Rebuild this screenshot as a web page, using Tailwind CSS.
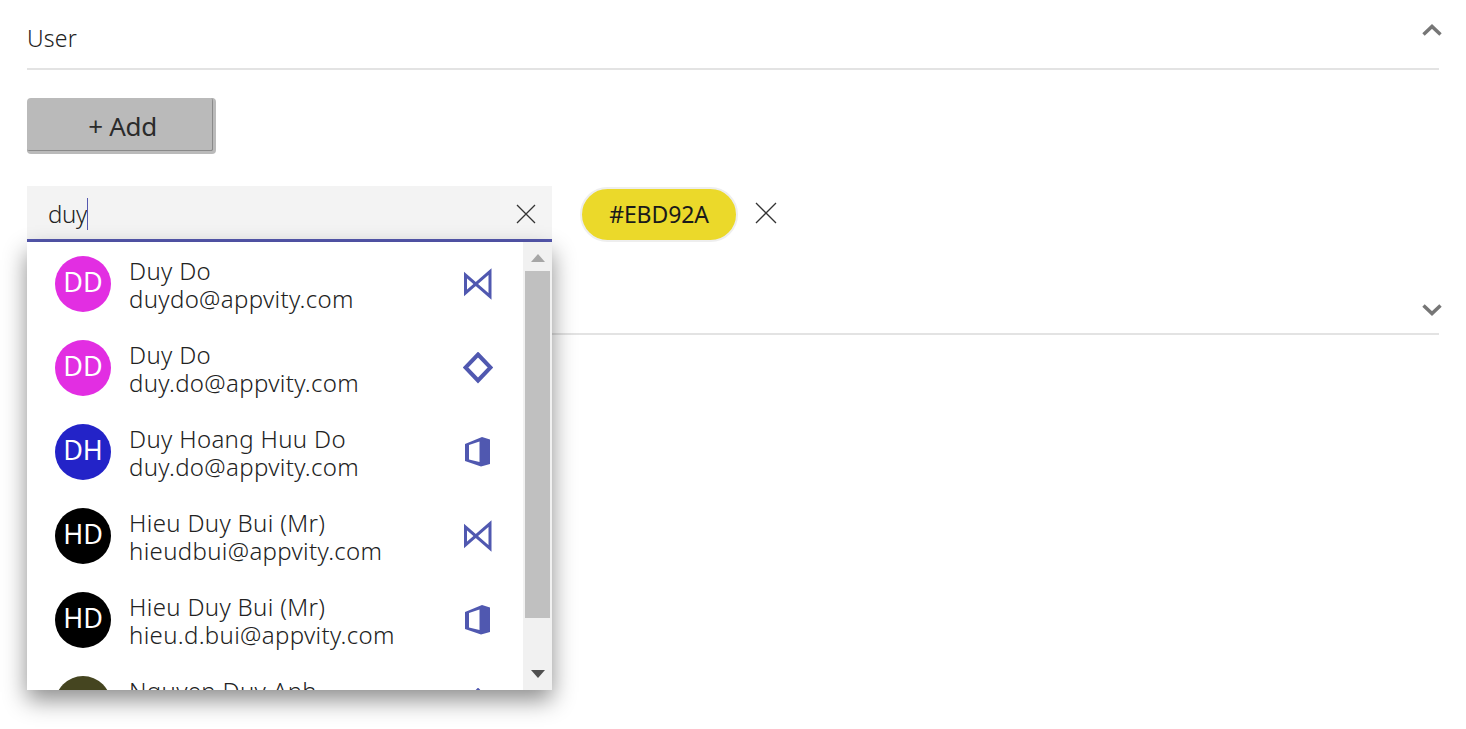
<!DOCTYPE html>
<html lang="en">
<head>
  <meta charset="UTF-8" />
  <title>User picker</title>
  <script src="https://cdn.jsdelivr.net/npm/@tailwindcss/browser@4"></script>
</head>
<body class="bg-white text-[#333] font-['Noto_Sans',sans-serif] overflow-hidden">
  <main class="w-[1466px] h-[729px] px-[27px] overflow-hidden">
    <!-- user section -->
    <section class="h-[70px] border-b-2 border-[#e3e3e3] flex justify-between items-start">
      <h2 class="text-[23px] leading-[30px] mt-[23px] font-light tracking-[0.2px] text-[#222]">User</h2>
      <svg class="mt-[23px] -mr-[4px]" width="22" height="14" viewBox="0 0 22 14"><path d="M2.500 11.500 11 3.500l8.500 8" fill="none" stroke="#767676" stroke-width="3.500"/></svg>
    </section>

    <button class="block mt-[28px] w-[189px] h-[56px] rounded-[4px] bg-[#bababa] border-r-[3px] border-b-[3px] border-[#bababa] shadow-[inset_-1px_-1px_0_#8a8a8a] text-[26px] leading-[56px] tracking-[-0.3px] text-[#2b2b2b] pl-[5px]">+ Add</button>

    <div class="relative mt-[32px] flex items-start h-[57px]">
      <div class="w-[525px] h-[56px] bg-[#f3f3f3] border-b-[3px] border-[#5558af] flex items-center justify-between relative">
        <div class="pl-[21px] flex items-center text-[24px] font-light tracking-[-0.3px] text-[#222] h-[34px] mt-[3px]">duy<span class="w-px h-[32px] bg-[#5558af]"></span></div>
        <div class="w-[52px] h-full bg-[#f4f4f4] flex items-center justify-center">
          <svg class="mt-[2px]" width="20" height="20" viewBox="0 0 20 20"><path d="M1 1l18 18M19 1 1 19" stroke="#333" stroke-width="1.300" fill="none"/></svg>
        </div>
      </div>

      <div class="ml-[28px] mt-[1px] h-[55px] w-[158px] rounded-full bg-[#ebd92a] border-2 border-[#eeeeee] flex items-center justify-center text-[23px] tracking-[-0.1px] text-[#1a1a1a]">#EBD92A</div>
      <svg class="ml-[17px] mt-[16px]" width="22" height="22" viewBox="0 0 22 22"><path d="M1 1l20 20M21 1 1 21" stroke="#333" stroke-width="1.300" fill="none"/></svg>

      <!-- results dropdown -->
      <div class="absolute left-0 top-[56px] z-10 w-[525px] h-[448px] bg-white overflow-hidden flex shadow-[0_10px_22px_rgba(0,0,0,0.45)]">
        <ul class="w-[496px] flex flex-col pt-[14px]">
          <li class="h-[84px] shrink-0 flex items-start pl-[28px] pr-[30px]">
            <span class="w-[56px] h-[56px] pb-[3px] rounded-full bg-[#e22ee2] text-white flex items-center justify-center text-[27px]">DD</span>
            <div class="ml-[18px] mt-[1px] flex-1 text-[24px] font-light tracking-[0.33px] leading-[28px] text-[#222]"><p>Duy Do</p><p>duydo@appvity.com</p></div>
            <svg class="mt-[12px]" width="30" height="32" viewBox="0 0 30 32"><path d="M2.500 7v18L27 3.500v25z" fill="none" stroke="#5058b0" stroke-width="3"/></svg>
          </li>
          <li class="h-[84px] shrink-0 flex items-start pl-[28px] pr-[30px]">
            <span class="w-[56px] h-[56px] pb-[3px] rounded-full bg-[#e22ee2] text-white flex items-center justify-center text-[27px]">DD</span>
            <div class="ml-[18px] mt-[1px] flex-1 text-[24px] font-light tracking-[0.33px] leading-[28px] text-[#222]"><p>Duy Do</p><p>duy.do@appvity.com</p></div>
            <svg class="mt-[12px]" width="30" height="32" viewBox="0 0 30 32"><path d="M15 2.500 27.500 15.500 15 28.500 2.500 15.500z" fill="none" stroke="#5058b0" stroke-width="4"/></svg>
          </li>
          <li class="h-[84px] shrink-0 flex items-start pl-[28px] pr-[30px]">
            <span class="w-[56px] h-[56px] pb-[3px] rounded-full bg-[#2323c8] text-white flex items-center justify-center text-[27px]">DH</span>
            <div class="ml-[18px] mt-[1px] flex-1 text-[24px] font-light tracking-[0.33px] leading-[28px] text-[#222]"><p>Duy Hoang Huu Do</p><p>duy.do@appvity.com</p></div>
            <svg class="mt-[12px]" width="30" height="32" viewBox="0 0 30 32"><path fill-rule="evenodd" d="M2 8 19 1l8 2.500V28l-9 2.500L2 25zM16.500 5.500 6 9v14.500l10.500 2.500z" fill="#5058b0"/></svg>
          </li>
          <li class="h-[84px] shrink-0 flex items-start pl-[28px] pr-[30px]">
            <span class="w-[56px] h-[56px] pb-[3px] rounded-full bg-black text-white flex items-center justify-center text-[27px]">HD</span>
            <div class="ml-[18px] mt-[1px] flex-1 text-[24px] font-light tracking-[0.33px] leading-[28px] text-[#222]"><p>Hieu Duy Bui (Mr)</p><p>hieudbui@appvity.com</p></div>
            <svg class="mt-[12px]" width="30" height="32" viewBox="0 0 30 32"><path d="M2.500 7v18L27 3.500v25z" fill="none" stroke="#5058b0" stroke-width="3"/></svg>
          </li>
          <li class="h-[84px] shrink-0 flex items-start pl-[28px] pr-[30px]">
            <span class="w-[56px] h-[56px] pb-[3px] rounded-full bg-black text-white flex items-center justify-center text-[27px]">HD</span>
            <div class="ml-[18px] mt-[1px] flex-1 text-[24px] font-light tracking-[0.33px] leading-[28px] text-[#222]"><p>Hieu Duy Bui (Mr)</p><p>hieu.d.bui@appvity.com</p></div>
            <svg class="mt-[12px]" width="30" height="32" viewBox="0 0 30 32"><path fill-rule="evenodd" d="M2 8 19 1l8 2.500V28l-9 2.500L2 25zM16.500 5.500 6 9v14.500l10.500 2.500z" fill="#5058b0"/></svg>
          </li>
          <li class="h-[84px] shrink-0 flex items-start pl-[28px] pr-[30px]">
            <span class="w-[56px] h-[56px] rounded-full bg-[#454520]"></span>
            <div class="ml-[18px] mt-[1px] flex-1 text-[24px] font-light tracking-[0.33px] leading-[28px] text-[#222]"><p>Nguyen Duy Anh</p></div>
            <svg class="mt-[12px]" width="30" height="32" viewBox="0 0 30 32"><path d="M15 2.500 27.500 15.500 15 28.500 2.500 15.500z" fill="none" stroke="#5058b0" stroke-width="4"/></svg>
          </li>
        </ul>
        <!-- scrollbar -->
        <div class="w-[29px] h-full bg-[#f1f1f1] flex flex-col items-center">
          <div class="h-[29px] pt-[2px] w-full flex items-center justify-center"><svg width="14" height="8" viewBox="0 0 14 8"><path d="M7 0l7 8H0z" fill="#a6a6a6"/></svg></div>
          <div class="w-[25px] h-[347px] bg-[#c0c0c0]"></div>
          <div class="h-[72px] w-full flex items-end justify-center pb-[12px]"><svg width="14" height="8" viewBox="0 0 14 8"><path d="M0 0h14L7 8z" fill="#505050"/></svg></div>
        </div>
      </div>
    </div>

    <!-- collapsed section behind the dropdown -->
    <section class="h-[92px] border-b-2 border-[#e3e3e3] flex justify-end items-start">
      <svg class="mt-[60px] -mr-[4px]" width="22" height="14" viewBox="0 0 22 14"><path d="M2.500 2.500 11 10.500l8.500-8" fill="none" stroke="#767676" stroke-width="3.500"/></svg>
    </section>
  </main>
</body>
</html>
